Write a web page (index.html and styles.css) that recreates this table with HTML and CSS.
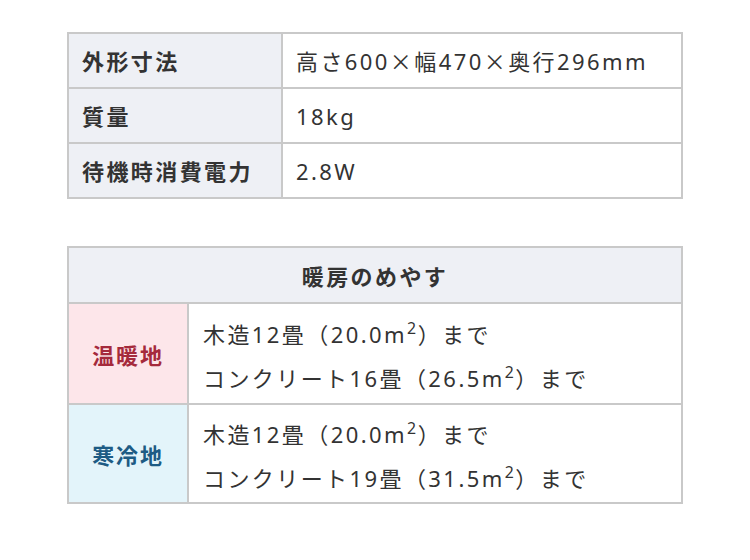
FILE: index.html
```html
<!DOCTYPE html>
<html lang="ja">
<head>
<meta charset="utf-8">
<link rel="stylesheet" href="styles.css">
</head>
<body>
<div class="page">
  <table class="spec">
    <tr><th>外形寸法</th><td>高さ600<span class="cj">×</span>幅470<span class="cj">×</span>奥行296mm</td></tr>
    <tr><th>質量</th><td>18kg</td></tr>
    <tr><th>待機時消費電力</th><td>2.8W</td></tr>
  </table>
  <table class="heat">
    <tr><th colspan="2" class="head">暖房のめやす</th></tr>
    <tr class="r1"><th class="warm">温暖地</th><td><div>木造12畳（20.0m<sup>2</sup>）まで</div><div>コンクリート16畳（26.5m<sup>2</sup>）まで</div></td></tr>
    <tr class="r2"><th class="cold">寒冷地</th><td><div>木造12畳（20.0m<sup>2</sup>）まで</div><div>コンクリート19畳（31.5m<sup>2</sup>）まで</div></td></tr>
  </table>
</div>
</body>
</html>
```

FILE: styles.css
```css
html, body { margin: 0; padding: 0; background: #fff; }
body {
  font-family: "Noto Sans", "Noto Sans CJK JP", sans-serif;
  color: #333;
}
.cj { font-family: "Noto Sans CJK JP", sans-serif; }
.page {
  padding: 32px 0 0 67px;
  display: flex;
  flex-direction: column;
  gap: 47px;
}
table {
  border-collapse: collapse;
  width: 616px;
  font-size: 22px;
  letter-spacing: 0.11em;
}
th, td {
  border: 2px solid #c9c9c9;
  padding: 0 13px;
  text-align: left;
  vertical-align: middle;
}
.spec th, .spec td { height: 53px; line-height: 30px; }
.spec th {
  width: 186px;
  background: #eef0f5;
  font-weight: bold;
  color: #333;
}
.spec td { font-weight: normal; }
.heat th.head {
  text-align: center;
  height: 54px;
  background: #eef0f5;
  font-weight: bold;
}
.heat th.warm, .heat th.cold {
  width: 92px;
  text-align: center;
  font-weight: bold;
  letter-spacing: 0.08em;
}
.warm { background: #fde6ea; color: #a52a3c; }
.cold { background: #e3f4fa; color: #1d5b84; }
.heat td { padding: 7px 14px 2px; }
.r1 td { padding-top: 6px; height: 91px; }
.r2 td { height: 87px; }
.heat td div { line-height: 44px; }
sup { font-size: 0.72em; line-height: 0; vertical-align: 0.6em; letter-spacing: 0.1em; }
```
